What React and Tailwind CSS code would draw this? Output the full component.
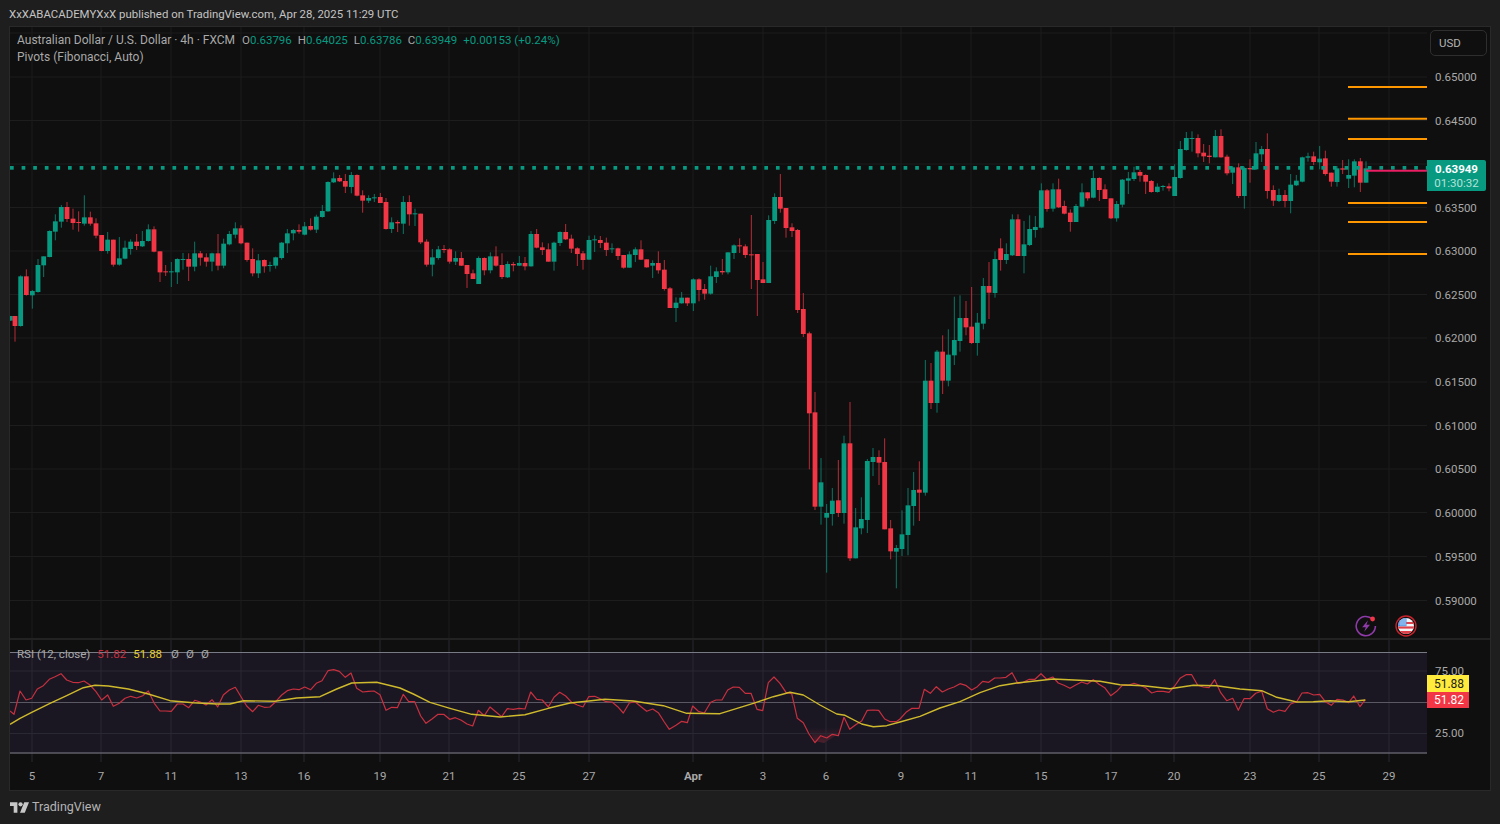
import React from "react";

const seg = (ox, oy, rows) => rows.map(([zx, up, bt, bb, wt, wb]) => ({
  x: ox + zx / 3, up, bt: oy + bt / 3, bb: oy + bb / 3, wt: oy + wt / 3, wb: oy + wb / 3,
}));

const candles = [
  ...seg(0, 160, [
    [31,1,468,482,468,482],[45,0,468,498,468,545],[62,1,349,498,346,500],[79,0,349,405,328,407],[97,1,393,406,390,446],[114,1,315,396,297,398],[131,1,289,316,289,351],[149,1,213,291,211,292],[166,1,184,215,163,241],[184,1,141,185,135,203],[201,0,141,177,126,186],[219,0,176,189,146,209],[236,0,186,188,154,215],[253,1,172,191,106,197],[271,0,172,191,155,197],[288,0,190,227,175,235],[305,0,225,273,225,274],[323,1,239,273,216,281],[340,0,239,314,239,320],[358,1,295,314,231,317],[375,1,263,296,242,298],[392,1,245,267,238,284],[410,0,245,258,222,270],[427,1,243,259,213,261],[445,1,208,243,193,245],[462,0,208,275,199,277],[480,0,274,337,274,366],[497,0,334,337,315,348],[514,1,334,337,306,381],[532,1,297,337,295,372],[549,1,297,299,279,329],[566,0,297,320,280,363],[584,1,280,320,245,334],[601,0,280,293,273,317],[619,0,292,305,280,320],[636,1,280,305,278,334],[654,0,280,317,222,331],[671,1,251,317,236,325],[688,1,222,253,213,256],[706,1,205,224,187,235],[723,0,205,250,196,253],[741,0,248,300,248,305],[758,0,297,340,265,349],[775,1,301,340,282,354],[793,0,300,319,298,338],[810,1,315,317,305,335],[827,1,292,317,290,326],[845,1,248,294,246,299],[862,1,220,250,207,279],[880,1,210,220,207,241],[897,0,210,215,193,221],[914,1,199,224,186,226],[932,0,198,209,175,212],[949,1,170,209,164,219],[967,1,153,171,135,173],[984,1,66,154,64,155],[1001,1,55,67,37,69],[1019,0,54,64,45,66],[1036,0,63,80,42,99],
  ]),
  ...seg(350, 160, [
    [4,1,45,81,36,100],[21,0,45,107,43,109],[38,0,106,122,91,158],[56,1,114,122,106,129],[73,1,112,114,102,126],[91,0,111,129,99,129],[108,0,126,207,114,209],[125,1,187,207,172,219],[143,0,186,190,181,216],[160,1,126,191,108,222],[178,0,126,163,106,197],[195,1,160,162,146,198],[212,0,161,247,161,252],[230,0,245,314,238,320],[247,1,292,314,267,349],[265,1,268,294,258,299],[282,0,267,270,255,279],[299,0,268,305,265,311],[317,1,294,305,274,315],[334,0,294,317,276,318],[351,0,315,342,315,384],[369,0,340,357,329,357],[386,1,294,372,289,372],[403,0,294,331,292,346],[421,1,289,331,277,340],[438,0,289,317,259,320],[456,0,315,351,280,357],[473,1,312,352,304,354],[490,0,312,316,306,334],[508,1,309,317,288,318],[525,0,309,319,291,331],[543,1,222,319,213,320],[560,0,222,263,207,265],[577,0,262,270,247,285],[595,0,268,305,250,305],[612,1,248,305,245,332],[630,1,216,249,214,258],[647,0,216,238,192,240],[664,0,236,266,224,279],[682,0,265,282,262,318],[699,0,280,300,273,329],[717,1,240,299,227,300],[734,1,238,241,226,276],[751,0,240,249,228,264],[769,0,248,270,233,288],[786,1,265,267,250,279],[804,0,265,288,263,300],[821,0,285,323,285,326],[838,1,283,323,274,323],[856,1,268,285,262,306],[873,0,268,299,241,300],[890,0,298,322,298,323],[908,1,309,317,301,354],[925,0,309,331,274,341],[943,0,329,387,300,392],[960,0,385,444,381,444],[978,1,428,444,412,486],[995,1,413,430,396,431],[1012,0,413,430,413,438],[1030,1,358,430,355,453],
  ]),
  ...seg(680, 160, [
    [57,0,358,390,355,424],[74,0,387,401,372,419],[92,1,349,401,317,404],[109,1,334,351,322,369],[127,0,333,337,297,344],[144,1,277,337,277,343],[162,1,256,279,253,297],[179,0,256,259,235,279],[196,0,259,285,253,294],[214,0,283,285,165,387],[232,0,282,360,282,468],[249,0,358,369,306,369],[266,1,180,369,166,369],[284,1,111,183,100,192],[301,0,111,146,42,158],[318,0,144,204,144,233],[336,0,202,213,190,231],[353,0,210,450,207,459],[370,0,447,522,399,531],
  ]),
  ...seg(780, 340, [
    [88,0,-20,220,-25,388],[105,0,217,500,156,510],[123,1,427,500,354,554],[140,1,519,533,492,698],[157,1,482,522,444,557],[175,0,481,519,360,531],[192,1,310,519,287,551],[210,0,310,655,186,663],[227,1,562,655,504,655],[244,1,537,565,472,583],[262,1,363,540,357,579],[279,1,351,366,324,408],[297,0,351,368,331,435],[314,0,366,568,295,568],[332,0,565,634,540,658],[349,1,624,635,615,745],[366,1,583,627,511,648],[384,1,496,585,444,646],[401,1,450,498,396,557],[418,0,449,458,364,543],[436,1,122,458,60,467],[453,0,122,189,69,207],[471,1,35,189,30,218],[488,0,35,122,-14,162],[505,1,44,122,-32,139],[523,1,0,46,-130,75],
  ]),
  ...seg(680, 160, [
    [840,1,474,543,406,575],[858,0,474,502,423,526],[875,0,500,549,381,552],[892,1,488,549,459,587],[910,1,378,491,354,508],[927,0,378,398,306,477],[945,1,297,399,274,413],[962,0,265,300,235,332],[979,1,282,300,250,312],[997,1,178,286,163,288],[1014,0,178,288,163,288],[1032,1,253,288,183,340],
  ]),
  ...seg(1020, 120, [
    [29,1,327,375,286,378],[46,1,321,330,288,353],[64,1,211,323,190,325],[81,0,211,267,207,275],[99,1,208,266,190,275],[116,0,208,262,176,264],[133,0,258,281,242,283],[151,0,278,306,268,335],[168,1,258,306,252,306],[186,1,217,260,190,262],[203,0,217,235,217,242],[220,1,174,233,152,235],[238,0,174,210,172,243],[255,0,208,237,193,237],[273,0,235,295,235,297],[290,1,252,295,243,305],[307,1,179,254,177,262],[325,1,175,182,156,222],[342,1,157,177,140,183],[360,0,156,167,150,185],[377,0,165,185,163,222],[394,0,183,216,180,218],[412,1,200,216,190,218],[429,1,198,201,195,212],[447,0,199,205,190,214],[464,1,171,228,133,228],[481,1,87,174,63,176],[499,1,54,90,36,92],[516,1,54,56,34,95],[534,0,54,100,43,112],[551,0,98,109,72,126],[568,0,107,111,75,130],[586,1,48,112,30,112],[603,0,48,112,28,113],[621,0,110,160,104,166],[638,1,142,158,138,192],[656,0,142,228,130,234],[673,1,144,228,140,266],[690,0,144,148,118,188],[708,1,100,148,66,150],[725,1,87,103,78,126],[742,0,87,213,40,236],[760,0,210,242,196,258],[777,1,225,243,206,246],[795,0,225,243,210,262],[812,1,194,243,162,280],[829,1,182,196,165,198],[847,1,112,185,110,187],[864,1,109,113,98,125],[881,0,109,126,95,135],[899,1,116,127,78,148],[916,0,115,162,92,167],[934,0,158,185,158,200],[951,1,145,186,138,200],[968,0,145,149,120,162],[986,1,165,176,118,204],[1003,1,124,167,118,202],[1021,0,124,188,114,216],[1038,1,145,188,124,188],
  ]),
];

const pts = (ox, oy, arr) => arr.map(([x, y]) => `${(ox + x / 3).toFixed(1)},${(oy + y / 3).toFixed(1)}`);

const redLine = [
  ...pts(0, 630, [[30,243],[42,253],[60,183],[78,210],[95,205],[112,177],[130,167],[148,148],[165,140],[183,131],[200,150],[218,157],[235,158],[252,153],[270,165],[288,185],[305,210],[323,195],[340,229],[358,220],[375,205],[392,199],[410,204],[428,197],[445,183],[463,220],[480,243],[497,243],[514,244],[532,222],[549,222],[566,233],[584,211],[601,216],[618,225],[636,209],[653,231],[670,195],[688,180],[706,172],[723,200],[740,228],[758,245],[775,226],[793,232],[810,231],[827,215],[845,195],[862,182],[880,177],[897,179],[914,171],[932,179],[949,160],[966,152],[984,122],[1001,119],[1018,124],[1036,142],[1053,129],[1070,175],[1088,186],[1105,184],[1122,183],[1140,194],[1158,241],[1175,232],[1192,233]]),
  ...pts(400, 650, [[0,155],[10,133],[26,155],[44,155],[62,198],[78,220],[96,207],[114,193],[131,193],[149,208],[166,203],[184,211],[201,222],[218,228],[235,181],[253,197],[270,171],[287,185],[305,200],[322,176],[340,178],[357,175],[375,177],[392,126],[410,148],[427,150],[445,171],[462,142],[479,127],[497,138],[515,157],[532,165],[549,171],[566,140],[584,139],[601,146],[618,155],[636,156],[653,170],[670,189],[688,159],[705,155],[723,170],[740,184],[758,177],[775,188],[793,216],[808,238],[828,226],[845,214],[862,218],[878,168],[895,184],[913,189],[932,157],[948,150],[966,150],[983,120],[1000,111],[1018,112],[1036,130],[1053,130],[1071,178],[1088,182],[1105,98],[1122,81],[1140,100],[1158,127],[1175,131],[1192,205],[1210,218],[1227,252],[1245,278],[1262,257],[1280,264],[1297,253],[1315,257],[1332,202],[1349,238],[1367,224],[1385,213],[1402,181],[1419,180],[1436,181],[1454,207],[1471,215],[1489,215]]),
  ...pts(900, 650, [[0,207],[18,187],[36,175],[57,175],[73,118],[91,130],[109,110],[127,126],[145,117],[162,111],[180,101],[197,106],[215,120],[232,110],[248,94],[266,97],[284,84],[301,84],[318,82],[336,68],[353,100],[370,97],[388,88],[405,88],[423,71],[440,88],[458,81],[475,99],[492,106],[510,115],[527,105],[545,96],[562,102],[580,89],[597,103],[614,113],[632,137],[650,124],[667,106],[685,106],[702,100],[720,106],[737,113],[755,129],[772,124],[790,124],[807,127],[824,108],[840,85],[858,74],[875,74],[893,106],[910,111],[927,113],[944,89],[962,128],[980,152],[998,145],[1015,181],[1032,146],[1050,146],[1067,130],[1085,124],[1102,176],[1120,187],[1137,180],[1155,184],[1172,162],[1190,155],[1206,129],[1224,128],[1241,135],[1259,133],[1276,155],[1294,166],[1311,148],[1329,150],[1346,158],[1361,138],[1380,170],[1396,149]]),
].join(" ");

const yellowLine = [
  ...pts(0, 630, [[30,283],[60,265],[95,247],[150,220],[200,197],[250,173],[285,166],[325,168],[385,177],[445,192],[510,212],[580,218],[650,222],[690,222],[730,212],[825,214],[890,204],[960,200],[1010,177],[1055,159],[1130,157]]),
  ...pts(400, 650, [[0,114],[40,132],[90,157],[150,175],[215,193],[300,201],[375,194],[445,175],[510,159],[615,148],[700,153],[790,167],[860,190],[960,191],[1060,160],[1120,140],[1170,127],[1210,135],[1260,165],[1310,192],[1335,196],[1385,222],[1420,230],[1460,227]]),
  ...pts(900, 650, [[0,216],[60,199],[120,174],[180,155],[240,128],[300,107],[350,99],[460,87],[600,94],[660,104],[730,107],[810,116],[880,106],[950,107],[1020,117],[1085,122],[1130,142],[1190,156],[1240,155],[1290,152],[1345,155],[1396,150]]),
].join(" ");

const vGrid = [32, 101, 171, 241, 304, 380, 449, 519, 589, 693, 763, 826, 901, 971, 1041, 1111, 1174, 1250, 1319, 1389];
const hGrid = [33, 77, 120.5, 164, 207.5, 251, 294.5, 338, 382, 425.5, 469, 512.5, 556.5, 600.5];
const pivots = [87, 118.7, 139, 203, 222, 254];
const dots = Array.from({ length: 123 }, (_, i) => 10 + i * 11.605);

const prices = [
  ["0.65000", 77], ["0.64500", 120.5], ["0.63500", 207.5], ["0.63000", 251], ["0.62500", 294.5], ["0.62000", 338],
  ["0.61500", 382], ["0.61000", 425.5], ["0.60500", 469], ["0.60000", 512.5], ["0.59500", 556.5], ["0.59000", 600.5],
];
const times = [
  ["5", 32], ["7", 101], ["11", 171], ["13", 241], ["16", 304], ["19", 380], ["21", 449], ["25", 519], ["27", 589],
  ["Apr", 693, true], ["3", 763], ["6", 826], ["9", 901], ["11", 971], ["15", 1041], ["17", 1111], ["20", 1174],
  ["23", 1250], ["25", 1319], ["29", 1389],
];

function MainPlot() {
  return (
    <svg className="block h-[611px] w-[1417px]" viewBox="10 27 1417 611">
      {hGrid.map((y) => <line key={y} x1="10" x2="1427" y1={y} y2={y} stroke="#1d1d1d" strokeWidth="1" />)}
      {vGrid.map((x) => <line key={x} x1={x} x2={x} y1="27" y2="638" stroke="#1d1d1d" strokeWidth="1" />)}
      {candles.map((c, i) => {
        const col = c.up ? "#089981" : "#f23645";
        return (
          <g key={i}>
            <line x1={c.x} x2={c.x} y1={c.wt} y2={c.wb} stroke={col} strokeWidth="1" opacity="0.75" />
            <rect x={c.x - 2.4} y={c.bt} width="4.8" height={Math.max(c.bb - c.bt, 1)} fill={col} />
          </g>
        );
      })}
      {dots.map((x) => <rect key={x} x={x} y="166" width="3.7" height="3.7" fill="#089981" />)}
      <line x1="1366" x2="1427" y1="170.8" y2="170.8" stroke="#e91e63" strokeWidth="2" />
      {pivots.map((y) => <line key={y} x1="1348" x2="1427" y1={y} y2={y} stroke="#ff9800" strokeWidth="2" />)}
    </svg>
  );
}

function RsiPlot() {
  return (
    <svg className="block h-[122px] w-[1417px]" viewBox="10 640 1417 122">
      <defs>
        <linearGradient id="rsiLow" x1="0" x2="0" y1="0" y2="1">
          <stop offset="0" stopColor="#f23645" stopOpacity="0" />
          <stop offset="1" stopColor="#f23645" stopOpacity="0.25" />
        </linearGradient>
      </defs>
      <rect x="10" y="652.5" width="1417" height="100.5" fill="#1a1723" />
      <polygon points="808,728 840,728 835,736 824,743 815,741" fill="url(#rsiLow)" />
      {vGrid.map((x) => <line key={x} x1={x} x2={x} y1="640" y2="762" stroke="#2a2833" strokeWidth="1" />)}
      <line x1="10" x2="1427" y1="671" y2="671" stroke="#2a2833" />
      <line x1="10" x2="1427" y1="733.5" y2="733.5" stroke="#2a2833" />
      <line x1="10" x2="1427" y1="652.5" y2="652.5" stroke="#787b86" strokeWidth="1" />
      <line x1="10" x2="1427" y1="702.5" y2="702.5" stroke="#5a5963" strokeWidth="1" />
      <line x1="10" x2="1427" y1="753" y2="753" stroke="#5f5f68" strokeWidth="1.4" />
      <polyline points={redLine} fill="none" stroke="#c8303f" strokeWidth="1.2" strokeLinejoin="round" />
      <polyline points={yellowLine} fill="none" stroke="#cfb92c" strokeWidth="1.4" strokeLinejoin="round" />
    </svg>
  );
}

function Bolt() {
  return (
    <svg className="h-[22px] w-[22px]" viewBox="0 0 22 22">
      <path d="M17.5 4.2A9.6 9.6 0 1 0 20.4 11" fill="none" stroke="#8e3aa8" strokeWidth="1.6" />
      <path d="M13 5.2 7.2 12.2h3.6l-1.6 4.6L15 9.8h-3.6z" fill="#8e3aa8" />
      <circle cx="17.6" cy="4" r="2.4" fill="#f23645" />
    </svg>
  );
}

function Flag() {
  return (
    <svg className="h-[22px] w-[22px]" viewBox="0 0 22 22">
      <defs><clipPath id="flagClip"><circle cx="11" cy="11" r="8" /></clipPath></defs>
      <circle cx="11" cy="11" r="10" fill="#0f0f0f" stroke="#c8232c" strokeWidth="1.4" />
      <g clipPath="url(#flagClip)">
        <rect x="3" y="3" width="16" height="16" fill="#f4f4f4" />
        <rect x="3" y="7" width="16" height="2" fill="#e0404a" />
        <rect x="3" y="11.4" width="16" height="2.2" fill="#e0404a" />
        <rect x="3" y="16" width="16" height="3" fill="#e0404a" />
        <rect x="3" y="3" width="8.5" height="8.2" fill="#4a90e2" />
        <path d="M4 5h7M4 7h7M4 9h7M6 3v8M8 3v8M10 3v8" stroke="#cfe3fa" strokeWidth="0.5" />
      </g>
    </svg>
  );
}

function Logo() {
  return (
    <svg className="h-[11px] w-[19px]" viewBox="0 0 36 20" fill="#c8c8c8">
      <path d="M0 0h14v20H7V7H0z" />
      <circle cx="20" cy="4" r="4" />
      <path d="M27 0h9l-8 20h-9z" />
    </svg>
  );
}

export default function App() {
  return (
    <div className="flex h-[824px] w-[1500px] flex-col overflow-hidden bg-[#1e1e1e] font-['Roboto',sans-serif] text-[11.5px] text-[#a9a9a9]">
      <div className="flex h-[26px] shrink-0 items-center pl-[9px] pt-[3px] text-[11.4px] text-[#c4c4c4]">
        XxXABACADEMYXxX published on TradingView.com, Apr 28, 2025 11:29 UTC
      </div>

      <div className="relative mx-[9px] flex h-[765px] w-[1482px] shrink-0 flex-col border border-[#292929] bg-[#0f0f0f]">
        <div className="flex h-[611px] shrink-0">
          <MainPlot />
          <div className="relative flex-1">
            {prices.map(([p, y]) => (
              <span key={p} className="absolute left-[8px] -translate-y-1/2" style={{ top: y - 26 }}>{p}</span>
            ))}
            <div className="absolute left-0 top-[133px] flex h-[31px] w-[59px] flex-col items-center justify-center rounded-br-[2px] rounded-tr-[2px] bg-[#089981] leading-[14px]">
              <span className="font-bold text-white">0.63949</span>
              <span className="text-[#b5e3d9]">01:30:32</span>
            </div>
            <div className="absolute left-[3px] top-[3px] flex h-[26px] w-[57px] items-center rounded-[5px] border border-[#2e2e2e] pl-[8px] pt-[1px] text-[#b4b4b4]">USD</div>
          </div>
        </div>

        <div className="h-[2px] shrink-0 bg-[#222222]" />

        <div className="flex h-[122px] shrink-0">
          <RsiPlot />
          <div className="relative flex-1">
            <span className="absolute left-[8px] top-[32px] -translate-y-1/2">75.00</span>
            <span className="absolute left-[8px] top-[94px] -translate-y-1/2">25.00</span>
            <div className="absolute left-0 top-[35px] flex h-[17px] w-[42px] items-center justify-center bg-[#ffeb3b] pl-[2px] text-[12px] text-[#222]">51.88</div>
            <div className="absolute left-0 top-[52px] flex h-[16px] w-[42px] items-center justify-center bg-[#f23645] pl-[2px] text-[12px] text-white">51.82</div>
          </div>
        </div>

        <div className="relative h-[28px] shrink-0">
          {times.map(([t, x, b]) => (
            <span key={t + x} className={b ? "absolute top-[6px] -translate-x-1/2 font-bold" : "absolute top-[6px] -translate-x-1/2"} style={{ left: x - 10 }}>{t}</span>
          ))}
        </div>

        <div className="absolute left-[7px] top-[5px] leading-[17px] text-[#a9a9a9]">
          <div className="flex">
            <span className="text-[12px]">Australian Dollar / U.S. Dollar · 4h · FXCM</span>
            <span className="ml-[7px]">O<span className="text-[#089981]">0.63796</span></span>
            <span className="ml-[6px]">H<span className="text-[#089981]">0.64025</span></span>
            <span className="ml-[6px]">L<span className="text-[#089981]">0.63786</span></span>
            <span className="ml-[6px]">C<span className="text-[#089981]">0.63949</span></span>
            <span className="ml-[6px] text-[#089981]">+0.00153 (+0.24%)</span>
          </div>
          <div className="text-[12px]">Pivots (Fibonacci, Auto)</div>
        </div>

        <div className="absolute left-[7px] top-[619px] flex gap-[7px] leading-[16px]">
          <span>RSI (12, close)</span>
          <span className="text-[#c8303f]">51.82</span>
          <span className="text-[#e8cf2a]">51.88</span>
          <span className="ml-[2px]">Ø</span><span>Ø</span><span>Ø</span>
        </div>

        <div className="absolute left-[1345px] top-[588px] flex items-center gap-[18px]">
          <Bolt />
          <Flag />
        </div>
      </div>

      <div className="flex flex-1 items-center gap-[3px] pl-[10px]">
        <Logo />
        <span className="text-[12.5px] text-[#b4b4b4]">TradingView</span>
      </div>
    </div>
  );
}
